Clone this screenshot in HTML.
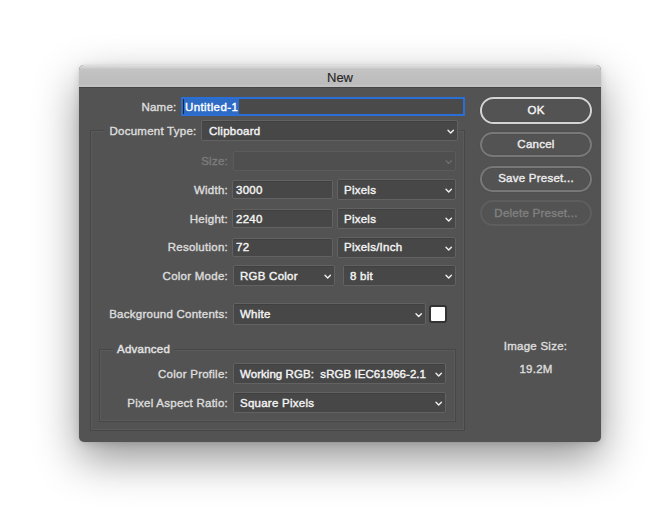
<!DOCTYPE html>
<html><head><meta charset="utf-8">
<style>
*{margin:0;padding:0;box-sizing:border-box}
html,body{width:660px;height:516px;background:#fff;overflow:hidden;font-family:"Liberation Sans",sans-serif}
.a{position:absolute}
.t{position:absolute;font-size:11.5px;line-height:14px;white-space:nowrap;letter-spacing:0.25px;-webkit-text-stroke:0.4px currentColor}
.dlg{position:absolute;left:79px;top:65px;width:522px;height:377px;border-radius:5px;background:#535353;
 box-shadow:0 0 0 0.5px rgba(0,0,0,.04),0 17px 44px rgba(0,0,0,.42),0 2px 8px rgba(0,0,0,.12)}
.title{position:absolute;left:79px;top:65px;width:522px;height:23px;border-radius:5px 5px 0 0;background:linear-gradient(#e4e4e4 0,#d8d8d8 1px,#d2d2d2 2.5px,#c4c4c4 4px,#bbbbbb 19px,#c1c1c1 20px,#c1c1c1 22px,#444 22px)}
.fld{position:absolute;background:#474747;border:1px solid #626262;border-radius:2px;box-shadow:inset 0 1px 0 #404040}
.dd{position:absolute;background:#474747;border:1px solid #626262;border-radius:2px;box-shadow:inset 0 1px 0 #404040}
.dd.dis{background:#4f4f4f;border-color:#5b5b5b;box-shadow:none}
.grp{position:absolute;border:1px solid #474747;box-shadow:inset 0 0 0 1px #5a5a5a}
.btn{position:absolute;left:480px;width:112px;height:25.5px;border-radius:13px;border:2px solid #787878;box-shadow:0 0 0 0.5px #4c4c4c, inset 0 0 0 0.5px #4c4c4c}
.ttl{font-size:13px;letter-spacing:0;-webkit-text-stroke:0.15px currentColor}
</style></head><body>
<div class="dlg"></div>
<div class="title"></div>
<div class="t ttl" style="left:327px;top:71px;color:#262626;">New</div>
<div class="grp" style="left:90px;top:130px;width:375px;height:301px"></div>
<div class="a" style="left:104px;top:126px;width:97px;height:8px;background:#535353"></div>
<div class="grp" style="left:99px;top:349px;width:357px;height:73px"></div>
<div class="a" style="left:113px;top:345px;width:61px;height:8px;background:#535353"></div>
<div class="t" style="right:483.5px;top:100px;color:#dcdcdc;">Name:</div>
<div class="a" style="left:181px;top:97px;width:284px;height:19px;border:2px solid #2a6fd8;background:#4a4a4a"></div>
<div class="a" style="left:184px;top:99px;width:55px;height:15px;background:#2d6bc5"></div>
<div class="a" style="left:183px;top:99px;width:1px;height:15px;background:#2a2420"></div>
<div class="t" style="left:185px;top:100px;color:#ffffff;letter-spacing:0.4px">Untitled-1</div>
<div class="t" style="right:463.5px;top:124px;color:#dcdcdc;">Document Type:</div>
<div class="dd" style="left:201px;top:120px;width:257px;height:21px"></div>
<div class="t" style="left:209px;top:124px;color:#f4f4f4;">Clipboard</div>
<svg class="a" style="left:444.0px;top:120px" width="14" height="21"><path d="M4.00 10.20 L6.70 12.90 L9.40 10.20" fill="none" stroke="#f0f0f0" stroke-width="1.4" stroke-linecap="round" stroke-linejoin="round"/></svg>
<div class="t" style="right:432px;top:154px;color:#7c7c7c;">Size:</div>
<div class="dd dis" style="left:233px;top:151px;width:223px;height:20px"></div>
<svg class="a" style="left:442.0px;top:151px" width="14" height="20"><path d="M4.00 9.70 L6.70 12.40 L9.40 9.70" fill="none" stroke="#6c6c6c" stroke-width="1.4" stroke-linecap="round" stroke-linejoin="round"/></svg>
<div class="t" style="right:432px;top:183px;color:#dcdcdc;">Width:</div>
<div class="fld" style="left:232px;top:180px;width:101px;height:19px"></div>
<div class="t" style="left:236px;top:183px;color:#f4f4f4;">3000</div>
<div class="dd" style="left:337px;top:179px;width:119px;height:21px"></div>
<div class="t" style="left:344px;top:183px;color:#f4f4f4;">Pixels</div>
<svg class="a" style="left:442.0px;top:179px" width="14" height="21"><path d="M4.00 10.20 L6.70 12.90 L9.40 10.20" fill="none" stroke="#f0f0f0" stroke-width="1.4" stroke-linecap="round" stroke-linejoin="round"/></svg>
<div class="t" style="right:432px;top:212px;color:#dcdcdc;">Height:</div>
<div class="fld" style="left:232px;top:209px;width:101px;height:19px"></div>
<div class="t" style="left:236px;top:212px;color:#f4f4f4;">2240</div>
<div class="dd" style="left:337px;top:208px;width:119px;height:21px"></div>
<div class="t" style="left:344px;top:212px;color:#f4f4f4;">Pixels</div>
<svg class="a" style="left:442.0px;top:208px" width="14" height="21"><path d="M4.00 10.20 L6.70 12.90 L9.40 10.20" fill="none" stroke="#f0f0f0" stroke-width="1.4" stroke-linecap="round" stroke-linejoin="round"/></svg>
<div class="t" style="right:432px;top:240px;color:#dcdcdc;">Resolution:</div>
<div class="fld" style="left:232px;top:238px;width:101px;height:19px"></div>
<div class="t" style="left:236px;top:240px;color:#f4f4f4;">72</div>
<div class="dd" style="left:337px;top:237px;width:119px;height:21px"></div>
<div class="t" style="left:344px;top:240px;color:#f4f4f4;">Pixels/Inch</div>
<svg class="a" style="left:442.0px;top:237px" width="14" height="21"><path d="M4.00 10.20 L6.70 12.90 L9.40 10.20" fill="none" stroke="#f0f0f0" stroke-width="1.4" stroke-linecap="round" stroke-linejoin="round"/></svg>
<div class="t" style="right:432px;top:269px;color:#dcdcdc;">Color Mode:</div>
<div class="dd" style="left:233px;top:265px;width:102px;height:21px"></div>
<div class="t" style="left:240px;top:269px;color:#f4f4f4;">RGB Color</div>
<svg class="a" style="left:321.0px;top:265px" width="14" height="21"><path d="M4.00 10.20 L6.70 12.90 L9.40 10.20" fill="none" stroke="#f0f0f0" stroke-width="1.4" stroke-linecap="round" stroke-linejoin="round"/></svg>
<div class="dd" style="left:343px;top:265px;width:113px;height:21px"></div>
<div class="t" style="left:350px;top:269px;color:#f4f4f4;">8 bit</div>
<svg class="a" style="left:442.0px;top:265px" width="14" height="21"><path d="M4.00 10.20 L6.70 12.90 L9.40 10.20" fill="none" stroke="#f0f0f0" stroke-width="1.4" stroke-linecap="round" stroke-linejoin="round"/></svg>
<div class="t" style="right:432px;top:307px;color:#dcdcdc;">Background Contents:</div>
<div class="dd" style="left:233px;top:303px;width:193px;height:22px"></div>
<div class="t" style="left:240px;top:307px;color:#f4f4f4;">White</div>
<svg class="a" style="left:412.0px;top:303px" width="14" height="22"><path d="M4.00 10.70 L6.70 13.40 L9.40 10.70" fill="none" stroke="#f0f0f0" stroke-width="1.4" stroke-linecap="round" stroke-linejoin="round"/></svg>
<div class="a" style="left:429px;top:305px;width:18px;height:18px;border-radius:3px;background:#fff;border:2px solid #333"></div>
<div class="t" style="left:117px;top:342px;color:#e4e4e4;">Advanced</div>
<div class="t" style="right:432px;top:367px;color:#dcdcdc;">Color Profile:</div>
<div class="dd" style="left:233px;top:363px;width:213px;height:21px"></div>
<div class="t" style="left:240px;top:367px;color:#f4f4f4;letter-spacing:0.05px">Working RGB:&nbsp; sRGB IEC61966-2.1</div>
<svg class="a" style="left:432.0px;top:363px" width="14" height="21"><path d="M4.00 10.20 L6.70 12.90 L9.40 10.20" fill="none" stroke="#f0f0f0" stroke-width="1.4" stroke-linecap="round" stroke-linejoin="round"/></svg>
<div class="t" style="right:432px;top:396px;color:#dcdcdc;">Pixel Aspect Ratio:</div>
<div class="dd" style="left:233px;top:392px;width:213px;height:21px"></div>
<div class="t" style="left:240px;top:396px;color:#f4f4f4;">Square Pixels</div>
<svg class="a" style="left:432.0px;top:392px" width="14" height="21"><path d="M4.00 10.20 L6.70 12.90 L9.40 10.20" fill="none" stroke="#f0f0f0" stroke-width="1.4" stroke-linecap="round" stroke-linejoin="round"/></svg>
<div class="btn" style="top:97px;height:27px;border-radius:13.5px;border:2.2px solid #d4d4d4"></div>
<div class="btn" style="top:131.5px"></div>
<div class="btn" style="top:166px"></div>
<div class="btn" style="top:200px;height:26px;border:2px solid #5e5e5e;box-shadow:none"></div>
<div class="t" style="left:476px;width:120px;text-align:center;top:103px;color:#f4f4f4">OK</div>
<div class="t" style="left:476px;width:120px;text-align:center;top:137px;color:#ececec">Cancel</div>
<div class="t" style="left:476px;width:120px;text-align:center;top:171px;color:#ececec">Save Preset...</div>
<div class="t" style="left:476px;width:120px;text-align:center;top:206px;color:#808080">Delete Preset...</div>
<div class="t" style="left:475.5px;width:120px;text-align:center;top:339px;color:#dcdcdc">Image Size:</div>
<div class="t" style="left:476px;width:120px;text-align:center;top:362px;color:#dcdcdc">19.2M</div>
</body></html>
